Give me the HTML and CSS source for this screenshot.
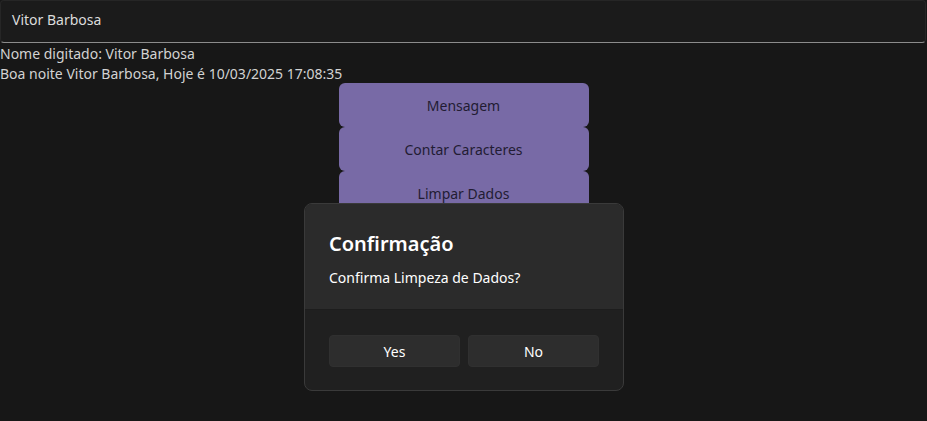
FILE: index.html
```html
<!DOCTYPE html>
<html lang="pt">
<head>
<meta charset="utf-8">
<title>App</title>
<link rel="stylesheet" href="styles.css">
</head>
<body>
<div class="page">
  <div class="textbox">Vitor Barbosa</div>
  <div class="lines">
    <div class="line">Nome digitado: Vitor Barbosa</div>
    <div class="line">Boa noite Vitor Barbosa, Hoje é 10/03/2025 17:08:35</div>
  </div>
  <div class="actions">
    <button class="action">Mensagem</button>
    <button class="action">Contar Caracteres</button>
    <button class="action">Limpar Dados</button>
  </div>
</div>
<div class="dialog">
  <div class="dialog-top">
    <div class="dialog-title">Confirmação</div>
    <div class="dialog-body">Confirma Limpeza de Dados?</div>
  </div>
  <div class="dialog-bottom">
    <button class="dbtn">Yes</button>
    <button class="dbtn">No</button>
  </div>
</div>
</body>
</html>
```
FILE: styles.css
```css
html, body {
  margin: 0;
  padding: 0;
  background: #171717;
  height: 100%;
  overflow: hidden;
}
body {
  font-family: "Segoe UI", "Noto Sans", "Open Sans", sans-serif;
  font-size: 14px;
  color: #d2d2d2;
}
.page {
  display: flex;
  flex-direction: column;
}
.textbox {
  height: 43px;
  box-sizing: border-box;
  margin-right: 1px;
  padding: 9px 11px 0;
  background: #1b1b1b;
  border: 1px solid #262626;
  border-bottom: 1px solid #8c8c8c;
  border-radius: 4px;
  color: #dcdcdc;
  line-height: 20px;
}
.lines {
  height: 40px;
  box-sizing: border-box;
  padding-top: 1px;
}
.line {
  line-height: 20px;
}
.actions {
  display: flex;
  flex-direction: column;
  align-items: center;
}
.action {
  width: 250px;
  height: 44px;
  border: none;
  border-radius: 6px;
  background: #786aa6;
  color: #221c33;
  font: inherit;
  padding: 0;
}
.dialog {
  position: absolute;
  left: 304px;
  top: 203px;
  width: 320px;
  height: 188px;
  box-sizing: border-box;
  border: 1px solid #3a3a3a;
  border-radius: 8px;
  overflow: hidden;
  display: flex;
  flex-direction: column;
  background: #202020;
}
.dialog-top {
  height: 106px;
  box-sizing: border-box;
  background: #2b2b2b;
  padding: 26px 24px 0;
  border-bottom: 1px solid #1d1d1d;
}
.dialog-title {
  font-size: 20px;
  font-weight: 600;
  color: #ffffff;
  line-height: 28px;
}
.dialog-body {
  margin-top: 10px;
  color: #ffffff;
  line-height: 20px;
}
.dialog-bottom {
  display: flex;
  gap: 8px;
  padding: 25px 24px 0;
}
.dbtn {
  flex: 1;
  height: 32px;
  border: 1px solid #303030;
  border-radius: 4px;
  background: #2d2d2d;
  color: #ffffff;
  font: inherit;
}
```
